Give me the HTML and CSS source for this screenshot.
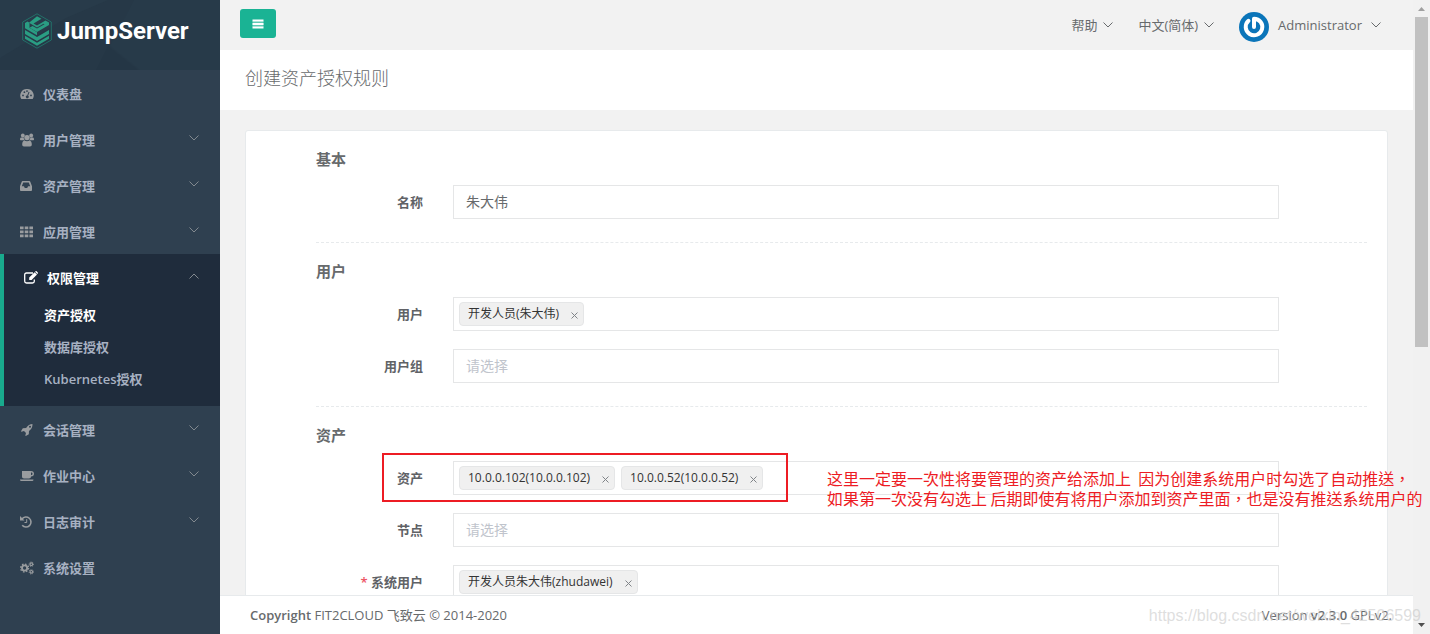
FILE: index.html
```html
<!DOCTYPE html>
<html lang="zh-CN">
<head>
<meta charset="utf-8">
<title>创建资产授权规则 - JumpServer</title>
<link rel="stylesheet" href="styles.css">
</head>
<body>
<svg class="defs" aria-hidden="true">
  <symbol id="down" viewBox="0 0 10 6"><path d="M.5.5 5 5 9.500.5" fill="none" stroke="currentColor"/></symbol>
  <symbol id="up" viewBox="0 0 10 6"><path d="M.5 5.500 5 1l4.500 4.500" fill="none" stroke="currentColor"/></symbol>
  <symbol id="cross" viewBox="0 0 7 7"><path d="m.5.5 6 6m0-6-6 6" fill="none" stroke="currentColor"/></symbol>
</svg>
<div class="app">
  <aside class="sidebar">
    <a class="brand" href="#">
      <svg class="brand-bg" viewBox="0 0 220 70" preserveAspectRatio="none" aria-hidden="true"><path d="M0 0h108l-42 18-66 40z" fill="#283b4a"/><path d="m108 46 30 24H96z" fill="#243645"/><path d="M134 0h86v70h-80l-30-24z" fill="#273a49"/></svg>
      <svg class="brand-mark" viewBox="0 0 30 36" aria-hidden="true"><path d="m15 .8 14.300 8.200v18L15 35.200.7 27V9z" fill="none" stroke="#22766c" stroke-width=".9"/><path d="m15 3.200 4.500 2.600-8 4.600 3.500 2 8.500-4.900L27 9.500v2.600l-12 7-7.500-4.300 3-1.800 4.500 2.600 7.500-4.300-1-.6-6.500 3.700-8-4.600z" fill="#2a9d83"/><path d="m3 10 2.500-1.400 2 1.200v5l7.500 4.400v3L3 15.200z" fill="#2a9d83"/><path d="m3 17 12 7 12-7v4l-12 7-12-7z" fill="#2a9d83"/><path d="m3 22.800 12 7 12-7v3L15 32.700 3 25.800z" fill="#2a9d83"/></svg>
      <span>JumpServer</span>
    </a>
    <nav>
      <ul class="menu">
        <li><a class="item" href="#"><svg class="ico" viewBox="0 0 14 14"><path fill="currentColor" fill-rule="evenodd" d="M7 2a6.500 6.500 0 0 1 5.700 10H1.300A6.500 6.500 0 0 1 7 2zM3 7.500a.9.900 0 1 0 0 1.800.9.900 0 0 0 0-1.800zM4.400 4.300a.9.900 0 1 0 0 1.800.9.900 0 0 0 0-1.800zM7 3.200A.9.900 0 1 0 7 5a.9.900 0 0 0 0-1.800zm4 4.300a.9.900 0 1 0 0 1.800.9.900 0 0 0 0-1.800zM8.600 4.800 7.200 8.500a1.400 1.400 0 1 0 .9.300l1.400-3.600z"/></svg>仪表盘</a></li>
        <li><a class="item" href="#"><svg class="ico" viewBox="0 0 14 14"><g fill="currentColor"><circle cx="2.800" cy="2.500" r="1.900"/><circle cx="11.200" cy="2.500" r="1.900"/><circle cx="7" cy="4.600" r="2.700"/><path d="M1 4.500h2.700c0 1.300.5 2 1.200 2.700H1.200C.3 7.200 0 6.800 0 6.200 0 5.500.3 4.700 1 4.500zm9.300 0H13c.7.2 1 1 1 1.700s-.3 1-1.200 1H9.100c.7-.7 1.200-1.400 1.200-2.700zM4.500 7.500c1.500.9 3.500.9 5 0 1.600.3 2.300 2 2.300 4 0 1.200-.6 2-1.800 2H4c-1.200 0-1.800-.8-1.800-2 0-2 .7-3.700 2.300-4z"/></g></svg>用户管理<svg class="arrow"><use href="#down"/></svg></a></li>
        <li><a class="item" href="#"><svg class="ico" viewBox="0 0 14 14"><path fill="currentColor" fill-rule="evenodd" d="M2.700 2h6.600q.7 0 1 .7l1.700 4.500v3.900q0 .9-.9.900H.900Q0 12 0 11.100V7.200l1.700-4.500q.3-.7 1-.7zm.5 1.500L1.800 7.300h2.100l.9 1.700h2.400l.9-1.700h2.100L8.800 3.500z"/></svg>资产管理<svg class="arrow"><use href="#down"/></svg></a></li>
        <li><a class="item" href="#"><svg class="ico" viewBox="0 0 14 14"><path fill="currentColor" d="M0 1.500h3.600v2.800H0zm4.700 0h3.600v2.800H4.700zm4.700 0H13v2.800H9.400zM0 5.500h3.600v2.800H0zm4.700 0h3.600v2.800H4.700zm4.700 0H13v2.800H9.400zM0 9.500h3.600v2.800H0zm4.700 0h3.600v2.800H4.700zm4.700 0H13v2.800H9.400z"/></svg>应用管理<svg class="arrow"><use href="#down"/></svg></a></li>
        <li class="active">
          <a class="item" href="#"><svg class="ico" viewBox="0 0 14 14"><path d="M9 2H2.500Q.700 2 .700 3.800v6.400Q.700 12 2.500 12h6q1.800 0 1.800-1.800V8.500" fill="none" stroke="currentColor" stroke-width="1.300"/><path fill="currentColor" d="m10.600 1.200 2.400 2.400L7.600 9H5.200V6.600zM11 .800l.6-.5q.5-.4 1 0l1.200 1.200q.4.500 0 1l-.5.600z"/></svg>权限管理<svg class="arrow"><use href="#up"/></svg></a>
          <ul class="submenu">
            <li><a class="current" href="#">资产授权</a></li>
            <li><a href="#">数据库授权</a></li>
            <li><a href="#">Kubernetes授权</a></li>
          </ul>
        </li>
        <li><a class="item" href="#"><svg class="ico" viewBox="0 0 14 14"><path fill="currentColor" fill-rule="evenodd" d="M12.500 1c.1 3-1 5-3.500 7l-.2 3.300-3 1.700-.5-.4.700-2.500-2-2-2.600.6L1 8.200l1.800-3 3.300-.2C8 2.400 9.800 1.100 12.500 1zM10 2.800a1 1 0 1 0 0 2 1 1 0 0 0 0-2z"/></svg>会话管理<svg class="arrow"><use href="#down"/></svg></a></li>
        <li><a class="item" href="#"><svg class="ico" viewBox="0 0 14 14"><path fill="currentColor" fill-rule="evenodd" d="M2 2h9c2 0 3 1.200 3 2.700S13 7.500 11 7.500c0 1.200-.7 2-2 2H4c-1.300 0-2-.8-2-2zm9 1.500v2.600c1 0 1.500-.5 1.500-1.300S12 3.500 11 3.500zM0 10.500h13.500c0 1-.7 1.500-1.700 1.500H1.700c-1 0-1.700-.5-1.700-1.500z"/></svg>作业中心<svg class="arrow"><use href="#down"/></svg></a></li>
        <li><a class="item" href="#"><svg class="ico" viewBox="0 0 14 14"><path fill="none" stroke="currentColor" stroke-width="1.600" d="M2 4a5 5 0 1 1 .2 6.300"/><path fill="currentColor" d="M0 1v4.500h4.500z"/><path fill="none" stroke="currentColor" d="M6.700 4.200v3.300H4.500"/></svg>日志审计<svg class="arrow"><use href="#down"/></svg></a></li>
        <li><a class="item" href="#"><svg class="ico" viewBox="0 0 14 14"><g fill="none" stroke="currentColor"><circle cx="4.600" cy="7" r="2.600" stroke-width="1.900"/><circle cx="4.600" cy="7" r="4" stroke-width="1.300" stroke-dasharray="1.570 1.570"/><circle cx="11.300" cy="3.200" r="1.300" stroke-width="1.100"/><circle cx="11.300" cy="3.200" r="2.200" stroke-dasharray=".86 .86"/><circle cx="11.300" cy="10.800" r="1.300" stroke-width="1.100"/><circle cx="11.300" cy="10.800" r="2.200" stroke-dasharray=".86 .86"/></g></svg>系统设置</a></li>
      </ul>
    </nav>
  </aside>

  <div class="main">
    <header class="topbar">
      <button class="toggle" type="button" aria-label="菜单"><svg viewBox="0 0 12 10"><path fill="#fff" opacity=".3" d="M.5 2h11v6H.5z"/><path fill="currentColor" d="M.5.500h11v2H.5zm0 3.500h11v2H.5zm0 3.500h11v2H.5z"/></svg></button>
      <div class="topnav">
        <button type="button">帮助<svg class="caret"><use href="#down"/></svg></button>
        <button type="button">中文(简体)<svg class="caret"><use href="#down"/></svg></button>
        <button class="account" type="button"><svg class="avatar" viewBox="0 0 30 30"><circle cx="15" cy="15" r="15" fill="#0b75b9"/><path d="M9.500 8.800A8.300 8.300 0 1 0 15 6.700V15" fill="none" stroke="#fff" stroke-width="4" stroke-linecap="round" stroke-linejoin="round"/></svg>Administrator<svg class="caret"><use href="#down"/></svg></button>
      </div>
    </header>
    <div class="heading"><h1>创建资产授权规则</h1></div>
    <main class="content">
      <form class="panel">
        <section>
          <h2>基本</h2>
          <div class="row"><label for="name">名称</label><input class="field text" id="name" type="text" value="朱大伟"></div>
        </section>
        <section>
          <h2>用户</h2>
          <div class="row"><label for="users">用户</label><div class="field"><span class="tag">开发人员(朱大伟)<button type="button" aria-label="移除"><svg><use href="#cross"/></svg></button></span><input id="users" type="text"></div></div>
          <div class="row"><label for="groups">用户组</label><input class="field text" id="groups" type="text" placeholder="请选择"></div>
        </section>
        <section>
          <h2>资产</h2>
          <div class="row"><label for="assets">资产</label><div class="field"><span class="tag">10.0.0.102(10.0.0.102)<button type="button" aria-label="移除"><svg><use href="#cross"/></svg></button></span><span class="tag">10.0.0.52(10.0.0.52)<button type="button" aria-label="移除"><svg><use href="#cross"/></svg></button></span><input id="assets" type="text"></div></div>
          <div class="row"><label for="nodes">节点</label><input class="field text" id="nodes" type="text" placeholder="请选择"></div>
          <div class="row"><label for="sysusers"><span class="req">*</span> 系统用户</label><div class="field"><span class="tag">开发人员朱大伟(zhudawei)<button type="button" aria-label="移除"><svg><use href="#cross"/></svg></button></span><input id="sysusers" type="text"></div></div>
        </section>
      </form>
    </main>
    <footer class="footer">
      <div><b>Copyright</b> FIT2CLOUD 飞致云 © 2014-2020</div>
      <div>Version <b>v2.3.0</b> GPLv2.</div>
    </footer>
  </div>

  <div class="scrollbar" aria-hidden="true">
    <svg viewBox="0 0 17 17"><path d="M5 11h7L8.500 7z" fill="#a0a0a0"/></svg>
    <div class="thumb"></div>
    <svg viewBox="0 0 17 17"><path d="M5 6h7l-3.500 4z" fill="#505050"/></svg>
  </div>

  <div class="mark-box"></div>
  <p class="mark-note" lang="zh-TW">这里一定要一次性将要管理的资产给添加上&nbsp; 因为创建系统用户时勾选了自动推送，<br>如果第一次没有勾选上 后期即使有将用户添加到资产里面，也是没有推送系统用户的</p>
  <div class="watermark">https://blog.csdn.net/weixin_42506599</div>
</div>
</body>
</html>
```
FILE: styles.css
```css
* { box-sizing: border-box; }
body {
  margin: 0;
  font: 13px/20px "Open Sans", "Noto Sans CJK SC", sans-serif;
  color: #676a6c;
  background: #f3f3f4;
}
h1, h2, p, ul { margin: 0; padding: 0; }
ul { list-style: none; }
a { color: inherit; text-decoration: none; }
button, input { font: inherit; color: inherit; border: 0; background: none; padding: 0; margin: 0; outline: 0; }
b { font-weight: 600; }
.defs { position: absolute; width: 0; height: 0; }

.app { position: relative; display: flex; height: 100vh; overflow: hidden; }

/* sidebar */
.sidebar { flex: 0 0 220px; background: #2f4050; color: #a7b1c2; font-weight: 600; }
.brand {
  position: relative;
  display: flex;
  align-items: center;
  gap: 5px;
  height: 70px;
  padding: 0 22px 8px;
  background: #263847;
  color: #fff;
  font: 700 24px/30px "Roboto", sans-serif;
}
.brand-bg { position: absolute; inset: 0; width: 100%; height: 100%; }
.brand-mark { position: relative; width: 30px; height: 36px; }
.brand span { position: relative; }
.item { display: flex; align-items: center; height: 46px; padding: 2px 20px 0; }
.ico { width: 14px; height: 14px; margin-right: 9px; color: #999c9f; }
.arrow { width: 10px; height: 6px; margin: 0 1px 5px auto; color: #82898f; }
.active { background: #1f2c3c; border-left: 4px solid #19aa8d; padding-bottom: 10px; }
.active .item { color: #fff; }
.active .ico { color: #fff; }
.submenu a { display: block; height: 32px; padding: 5px 0 7px 40px; }
.submenu .current { color: #fff; }

/* main column */
.main { flex: 1; min-width: 0; display: flex; flex-direction: column; background: #f2f2f2; }
.topbar { display: flex; justify-content: space-between; align-items: center; height: 50px; padding: 0 32px 0 20px; }
.toggle { width: 36px; height: 29px; margin-bottom: 3px; border-radius: 3px; background: #1ab394; color: #fff; }
.toggle svg { display: block; width: 12px; height: 10px; margin: auto; }
.topnav { display: flex; align-items: center; gap: 25px; }
.topnav button { display: flex; align-items: center; }
.caret { width: 10px; height: 6px; margin-left: 6px; }
.avatar { width: 30px; height: 30px; margin: 3px 9px 0 0; }
.account .caret { margin-left: 9px; }
.heading { padding: 14px 25px; height: 60px; background: #fff; }
.heading h1 { font-size: 18px; line-height: 28px; font-weight: 300; }
.content { flex: 1; min-height: 0; overflow: hidden; padding: 20px 25px 0; }

/* form */
.panel { background: #fff; border: 1px solid #e7eaec; border-radius: 3px; padding: 0 20px 20px 70px; }
section + section { margin-top: 23px; border-top: 1px dashed #e7eaec; }
section h2 { padding: 18px 0 16px; font-size: 15px; line-height: 20px; font-weight: 600; }
.row { display: flex; align-items: center; gap: 30px; padding-right: 88px; }
.row + .row { margin-top: 18px; }
.row label { flex: 0 0 107px; text-align: right; font-weight: 600; color: #606266; }
.req { color: #ed5565; }
.field { flex: 1; min-width: 0; display: flex; align-items: center; gap: 6px; height: 34px; padding: 0 5px; border: 1px solid #e5e6e7; background: #fff; }
.text { padding: 0 12px 2px; font-size: 14px; }
.text::placeholder { color: #c0c4cc; opacity: 1; }
.field input { flex: 1; min-width: 0; }
.tag { display: flex; align-items: center; height: 24px; padding: 0 5px 0 8px; border: 1px solid #e5e6e7; border-radius: 4px; background: #f0f0f0; color: #333; font-size: 12px; }
.tag button { display: flex; margin: 2px 0 0 12px; color: #808488; }
.tag svg { width: 7px; height: 7px; }

.footer { display: flex; justify-content: space-between; align-items: center; height: 39px; padding: 0 21px 0 30px; border-top: 1px solid #e7eaec; background: #fff; }

/* page scrollbar */
.scrollbar { flex: 0 0 17px; display: flex; flex-direction: column; background: #f1f1f1; }
.scrollbar svg { flex: 0 0 17px; width: 17px; }
.thumb { flex: 0 0 52%; margin: 0 2px; background: #c1c1c1; }
.scrollbar .thumb + svg { margin-top: auto; }

/* annotations over the page */
.mark-box { position: absolute; left: 382px; top: 453px; width: 406px; height: 49px; border: 2px solid #ed1c24; }
.mark-note { position: absolute; left: 827px; top: 468px; white-space: nowrap; color: #ed1c24; font: 16px/20px "Noto Sans CJK TC", sans-serif; }
.watermark { position: absolute; right: 9px; bottom: 8px; color: rgba(200, 200, 200, .6); font: 16px/20px "Liberation Sans", sans-serif; }
```
